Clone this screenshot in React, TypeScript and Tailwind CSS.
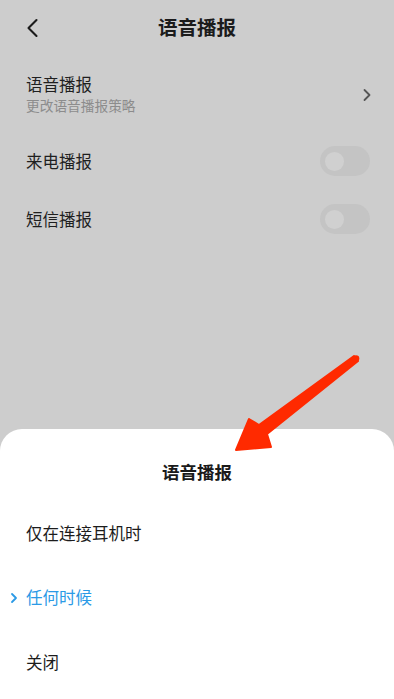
import React from "react";

const font = { fontFamily: '"Noto Sans CJK SC", "Noto Sans", sans-serif' };

function Toggle() {
  return (
    <div className="w-[50px] h-[30px] rounded-full bg-[#c4c4c4] flex items-center px-[5px]">
      <div className="w-[19px] h-[19px] rounded-full bg-[#d0d0d0]" />
    </div>
  );
}

function Arrow() {
  return (
    <svg
      className="absolute left-0 top-0 pointer-events-none"
      width="394"
      height="699"
      viewBox="0 0 394 699"
    >
      <polygon
        points="236,450 249,419 259,425 354,356 358,361 267,434 271,447"
        fill="#ff2a00"
        stroke="#ff2a00"
        strokeWidth="2"
        strokeLinejoin="round"
      />
      <circle cx="356" cy="358.5" r="3.3" fill="#ff2a00" />
    </svg>
  );
}

export default function App() {
  return (
    <div className="relative w-[394px] h-[699px] overflow-hidden bg-[#cdcdcd] flex flex-col" style={font}>
      {/* header */}
      <div className="h-[54px] grid grid-cols-[60px_1fr_60px] items-center">
        <div className="pl-[25px] pt-[1px]">
          <svg width="16" height="20" viewBox="0 0 16 20">
            <path d="M11.5 2 L3.5 10 L11.5 18" fill="none" stroke="#1b1b1b" strokeWidth="2.1" strokeLinecap="round" strokeLinejoin="round" />
          </svg>
        </div>
        <div className="text-center text-[19.5px] font-bold text-[#1b1b1b] leading-[24px]">语音播报</div>
        <div />
      </div>

      {/* settings list */}
      <div className="h-[78px] flex items-center justify-between pl-[26px] pr-[22px] pt-[3px]">
        <div className="flex flex-col">
          <span className="text-[16.5px] leading-[21px] text-[#1f1f1f]">语音播报</span>
          <span className="text-[13.7px] leading-[20px] text-[#8c8c8c]">更改语音播报策略</span>
        </div>
        <svg width="10" height="14" viewBox="0 0 10 14">
          <path d="M2.5 2 L7.5 7 L2.5 12" fill="none" stroke="#555555" strokeWidth="1.8" strokeLinecap="round" strokeLinejoin="round" />
        </svg>
      </div>
      <div className="h-[58px] flex items-center justify-between pl-[26px] pr-[24px]">
        <span className="text-[16.5px] text-[#1f1f1f]">来电播报</span>
        <Toggle />
      </div>
      <div className="h-[58px] flex items-center justify-between pl-[26px] pr-[24px]">
        <span className="text-[16.5px] text-[#1f1f1f]">短信播报</span>
        <Toggle />
      </div>

      {/* bottom sheet */}
      <div className="mt-auto h-[270px] bg-white rounded-t-[22px] pt-[31px] flex flex-col">
        <div className="h-[24px] text-center text-[17.5px] leading-[24px] font-bold text-[#1a1a1a]">语音播报</div>
        <div className="h-[17px]" />
        <div className="h-[64px] flex items-center pl-[26px] text-[16.5px] text-[#1c1c1c]">仅在连接耳机时</div>
        <div className="h-[65px] flex items-center pl-[10px] text-[16.5px] text-[#2b9ae6]">
          <svg width="8" height="12" viewBox="0 0 8 12" className="mr-[8px]">
            <path d="M2 2 L6 6 L2 10" fill="none" stroke="#2b9ae6" strokeWidth="1.8" strokeLinecap="round" strokeLinejoin="round" />
          </svg>
          任何时候
        </div>
        <div className="h-[65px] flex items-center pl-[26px] text-[16.5px] text-[#1c1c1c]">关闭</div>
      </div>

      <Arrow />
    </div>
  );
}
